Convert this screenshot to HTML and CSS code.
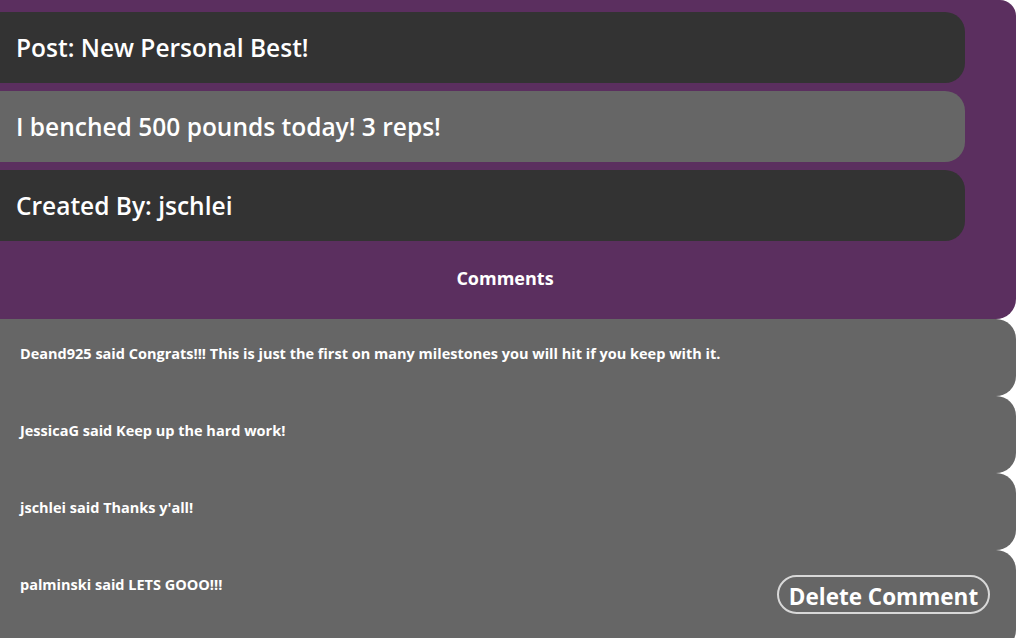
FILE: index.html
```html
<!DOCTYPE html>
<html>
<head>
<meta charset="utf-8">
<link rel="stylesheet" href="styles.css">
</head>
<body>
<section class="post">
  <div class="field">Post: New Personal Best!</div>
  <div class="field alt">I benched 500 pounds today! 3 reps!</div>
  <div class="field">Created By: jschlei</div>
  <h3 class="comments-title">Comments</h3>
</section>
<section class="comments">
  <div class="comment"><p>Deand925 said Congrats!!! This is just the first on many milestones you will hit if you keep with it.</p></div>
  <div class="comment"><p>JessicaG said Keep up the hard work!</p></div>
  <div class="comment"><p>jschlei said Thanks y'all!</p></div>
  <div class="comment last"><p>palminski said LETS GOOO!!!</p><button class="delete">Delete Comment</button></div>
</section>
</body>
</html>
```
FILE: styles.css
```css
html, body {
  margin: 0;
  padding: 0;
  background: #ffffff;
}
body {
  font-family: "Open Sans", "Noto Sans", sans-serif;
  color: #ffffff;
  overflow: hidden;
}
.post {
  width: 1016px;
  box-sizing: border-box;
  background: #5b2f5f;
  border-radius: 0 16px 20px 0;
  padding-top: 12px;
  display: flex;
  flex-direction: column;
  gap: 8px;
}
.field {
  width: 965px;
  box-sizing: border-box;
  height: 71px;
  background: #333333;
  border-radius: 0 20px 20px 0;
  padding-left: 16px;
  display: flex;
  align-items: center;
  font-size: 24.5px;
  font-weight: 600;
}
.field.alt {
  background: #666666;
}
.comments-title {
  margin: 0;
  height: 70px;
  box-sizing: border-box;
  padding: 0 6px 12px 0;
  display: flex;
  align-items: center;
  justify-content: center;
  font-size: 18px;
  font-weight: 700;
}
.comments {
  display: flex;
  flex-direction: column;
}
.comment {
  width: 1016px;
  box-sizing: border-box;
  height: 77px;
  background: #666666;
  border-radius: 0 20px 20px 0;
  padding: 25px 26px 0 20px;
  display: flex;
  justify-content: space-between;
  align-items: flex-start;
}
.comment p {
  margin: 0;
  font-size: 14.5px;
  font-weight: 700;
  line-height: 20px;
}
.comment.last {
  height: 100px;
}
.delete {
  margin-top: 0;
  height: 39px;
  width: 213px;
  box-sizing: border-box;
  background: transparent;
  border: 2px solid #d8d8d8;
  border-radius: 20px;
  color: #ffffff;
  font-family: "Open Sans", "Noto Sans", sans-serif;
  font-size: 22.5px;
  font-weight: 700;
  padding: 3px 0 0 0;
  cursor: pointer;
}
```
